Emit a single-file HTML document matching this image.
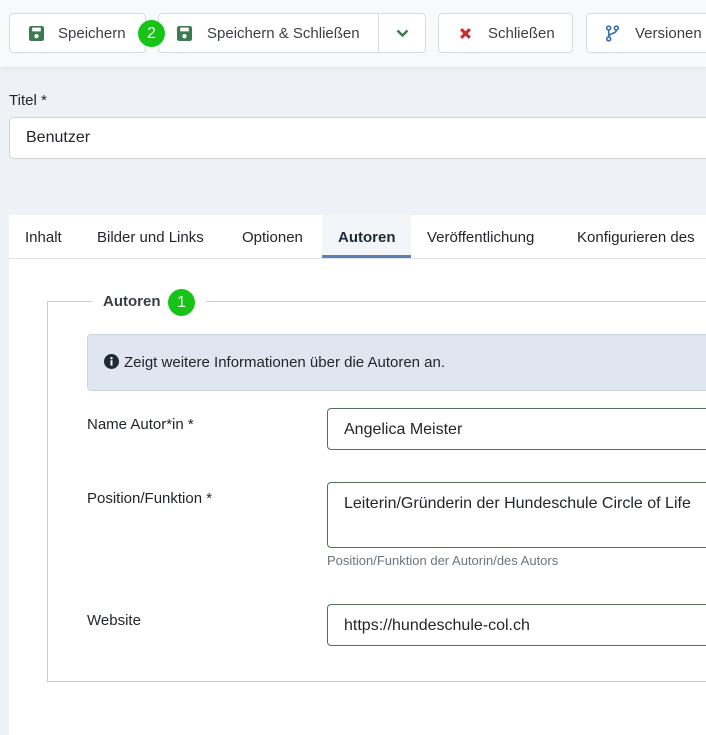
<!DOCTYPE html>
<html><head><meta charset="utf-8"><style>
*{box-sizing:border-box;margin:0;padding:0}
body{width:706px;height:724px;overflow:hidden;background:#eef2f6;font-family:"Liberation Sans",sans-serif;color:#22262a;position:relative}
.tb{position:absolute;left:0;top:0;width:706px;height:67px;background:#f8f9fb;box-shadow:0 2px 4px rgba(0,0,0,.05)}
.btn{position:absolute;top:13px;height:40px;background:#fff;border:1px solid #d6dbe0;border-radius:4px;font-size:15px;line-height:40px;color:#3a3f44;white-space:nowrap}
.ic{position:absolute;top:12px}
.badge{position:absolute;width:27px;height:27px;border-radius:50%;background:#16c316;color:#fff;font-size:16px;line-height:27px;text-align:center}
.abs{position:absolute;white-space:nowrap}
.inp{position:absolute;background:#fff;border:1px solid #52705a;border-radius:4px;font-size:16px;padding-left:16px;color:#22262a}
</style></head><body>
<div class="tb"></div>
<div class="btn" style="left:9px;width:137px"><svg class="ic" style="left:19px" width="15" height="15" viewBox="0 0 14 14"><rect x="0" y="0" width="14" height="14" rx="2" fill="#3c7a50"/><rect x="3" y="1.5" width="8" height="3.5" fill="#fff"/><circle cx="7" cy="9.5" r="2" fill="#fff"/></svg><span style="position:absolute;left:48px">Speichern</span></div>
<div class="btn" style="left:158px;width:268px"><svg class="ic" style="left:18px" width="15" height="15" viewBox="0 0 14 14"><rect x="0" y="0" width="14" height="14" rx="2" fill="#3c7a50"/><rect x="3" y="1.5" width="8" height="3.5" fill="#fff"/><circle cx="7" cy="9.5" r="2" fill="#fff"/></svg><span style="position:absolute;left:48px">Speichern &amp; Schließen</span><div style="position:absolute;left:219px;top:0;width:1px;height:38px;background:#d6dbe0"></div><svg style="position:absolute;left:237px;top:15px" width="13" height="9" viewBox="0 0 13 9"><path d="M1.5 1.5 L6.5 6.5 L11.5 1.5" stroke="#3c7a50" stroke-width="2.4" fill="none"/></svg></div>
<div class="badge" style="left:138px;top:20px">2</div>
<div class="btn" style="left:438px;width:135px"><svg class="ic" style="left:20px;top:13px" width="13" height="13" viewBox="0 0 12 12"><path d="M2 2L10 10M10 2L2 10" stroke="#c52b2b" stroke-width="2.8"/></svg><span style="position:absolute;left:49px">Schließen</span></div>
<div class="btn" style="left:586px;width:140px"><svg class="ic" style="left:19px;top:11px" width="13" height="17" viewBox="0 0 12 15"><circle cx="2.5" cy="2.5" r="1.8" stroke="#3a6fb0" stroke-width="1.5" fill="none"/><circle cx="9.5" cy="2.5" r="1.8" stroke="#3a6fb0" stroke-width="1.5" fill="none"/><circle cx="2.5" cy="12.5" r="1.8" stroke="#3a6fb0" stroke-width="1.5" fill="none"/><path d="M2.5 4.5V10.5M9.5 4.5C9.5 8 2.5 7 2.5 10.5" stroke="#3a6fb0" stroke-width="1.5" fill="none"/></svg><span style="position:absolute;left:48px">Versionen</span></div>
<div class="abs" style="left:9px;top:92px;font-size:15px">Titel *</div>
<div class="inp" style="left:9px;top:117px;width:710px;height:42px;border-color:#cfd4da;line-height:40px">Benutzer</div>
<div style="position:absolute;left:9px;top:215px;width:700px;height:520px;background:#fff"></div>
<div style="position:absolute;left:9px;top:258px;width:700px;height:1px;background:#dfe3e8"></div>
<div style="position:absolute;left:322px;top:215px;width:89px;height:43px;background:#f3f5f8;border-bottom:3px solid #5b80b4"></div>
<div class="abs" style="left:25px;top:229px;font-size:15px">Inhalt</div>
<div class="abs" style="left:97px;top:229px;font-size:15px">Bilder und Links</div>
<div class="abs" style="left:242px;top:229px;font-size:15px">Optionen</div>
<div class="abs" style="left:338px;top:229px;font-size:15px;font-weight:bold;color:#1d2a3a">Autoren</div>
<div class="abs" style="left:427px;top:229px;font-size:15px">Veröffentlichung</div>
<div class="abs" style="left:577px;top:229px;font-size:15px">Konfigurieren des</div>
<div style="position:absolute;left:47px;top:301px;width:680px;height:381px;border:1px solid #c6ccd3"></div>
<div style="position:absolute;left:92px;top:290px;width:114px;height:22px;background:#fff"></div>
<div class="abs" style="left:103px;top:293px;font-size:15px;font-weight:bold;color:#3a3f44">Autoren</div>
<div class="badge" style="left:168px;top:289px">1</div>
<div style="position:absolute;left:87px;top:334px;width:640px;height:57px;background:#dfe6f0;border:1px solid #cbd4e0;border-radius:4px"></div>
<svg style="position:absolute;left:104px;top:354px" width="15" height="15" viewBox="0 0 15 15"><circle cx="7.5" cy="7.5" r="7.5" fill="#1f2a36"/><rect x="6.5" y="6.3" width="2" height="5.2" fill="#fff"/><circle cx="7.5" cy="4.2" r="1.2" fill="#fff"/></svg>
<div class="abs" style="left:124px;top:354px;font-size:15px">Zeigt weitere Informationen über die Autoren an.</div>
<div class="abs" style="left:87px;top:416px;font-size:15px">Name Autor*in *</div>
<div class="inp" style="left:327px;top:408px;width:400px;height:42px;line-height:41px">Angelica Meister</div>
<div class="abs" style="left:87px;top:490px;font-size:15px">Position/Funktion *</div>
<div class="inp" style="left:327px;top:482px;width:400px;height:66px;padding-top:11px;line-height:20px">Leiterin/Gründerin der Hundeschule Circle of Life</div>
<div class="abs" style="left:327px;top:553px;font-size:13px;color:#6c757d">Position/Funktion der Autorin/des Autors</div>
<div class="abs" style="left:87px;top:612px;font-size:15px">Website</div>
<div class="inp" style="left:327px;top:604px;width:400px;height:42px;line-height:41px">https://hundeschule-col.ch</div>
</body></html>
